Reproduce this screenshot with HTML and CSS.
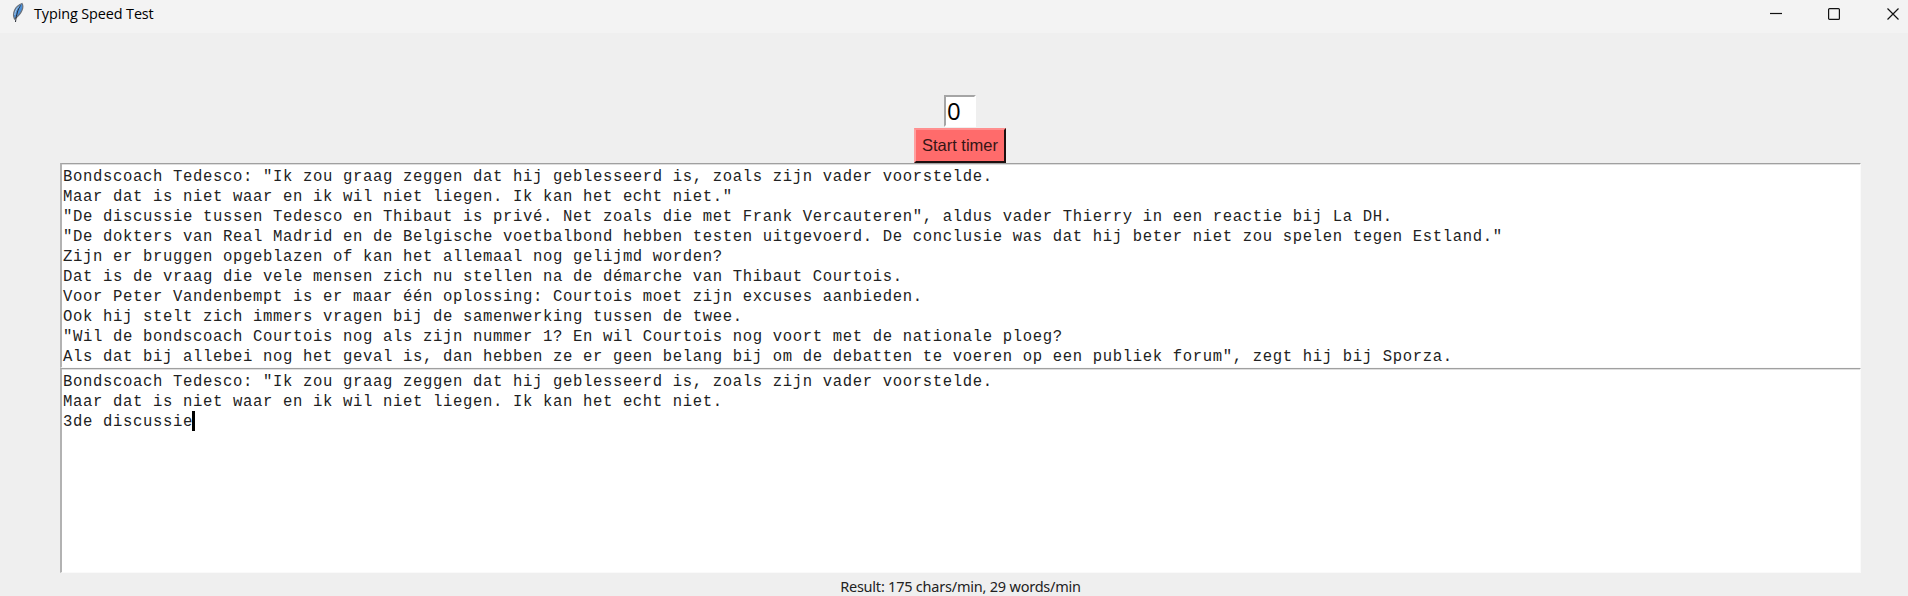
FILE: index.html
```html
<!DOCTYPE html>
<html lang="nl">
<head>
<meta charset="utf-8">
<title>Typing Speed Test</title>
<link rel="stylesheet" href="styles.css">
</head>
<body>
<header class="titlebar">
<svg class="feather" width="14" height="22" viewBox="0 0 14 22"><path d="M3.500 17C1 11 4 4 11 1.500c2 3 .5 10-7.500 15.500z" fill="#4a90d9" stroke="#6b7078" stroke-width="1.200"/><path d="M9.500 3.500C7 7 5.500 12 4.500 20" fill="none" stroke="#252a33" stroke-width="1"/><path d="M8 4.500C5 7 4 10 3.800 13" fill="none" stroke="#a9c8e5" stroke-width="1"/></svg>
<span class="caption">Typing Speed Test</span>
<div class="controls">
<svg width="12" height="12" viewBox="0 0 12 12"><path d="M0 5.500h12"/></svg>
<svg width="12" height="12" viewBox="0 0 12 12"><rect x=".6" y=".6" width="10.800" height="10.800" rx="1"/></svg>
<svg width="12" height="12" viewBox="0 0 12 12"><path d="M.5.500l11 11M11.500.500l-11 11"/></svg>
</div>
</header>
<main class="content">
<div class="counter">0</div>
<button class="start"><span>Start timer</span></button>
<div class="textbox">Bondscoach Tedesco: "Ik zou graag zeggen dat hij geblesseerd is, zoals zijn vader voorstelde.
Maar dat is niet waar en ik wil niet liegen. Ik kan het echt niet."
"De discussie tussen Tedesco en Thibaut is privé. Net zoals die met Frank Vercauteren", aldus vader Thierry in een reactie bij La DH.
"De dokters van Real Madrid en de Belgische voetbalbond hebben testen uitgevoerd. De conclusie was dat hij beter niet zou spelen tegen Estland."
Zijn er bruggen opgeblazen of kan het allemaal nog gelijmd worden?
Dat is de vraag die vele mensen zich nu stellen na de démarche van Thibaut Courtois.
Voor Peter Vandenbempt is er maar één oplossing: Courtois moet zijn excuses aanbieden.
Ook hij stelt zich immers vragen bij de samenwerking tussen de twee.
"Wil de bondscoach Courtois nog als zijn nummer 1? En wil Courtois nog voort met de nationale ploeg?
Als dat bij allebei nog het geval is, dan hebben ze er geen belang bij om de debatten te voeren op een publiek forum", zegt hij bij Sporza.</div>
<div class="textbox">Bondscoach Tedesco: "Ik zou graag zeggen dat hij geblesseerd is, zoals zijn vader voorstelde.
Maar dat is niet waar en ik wil niet liegen. Ik kan het echt niet.
3de discussie<span class="caret"></span></div>
<div class="result">Result: 175 chars/min, 29 words/min</div>
</main>
</body>
</html>
```
FILE: styles.css
```css
* { box-sizing: border-box; }
body { margin: 0; width: 1908px; height: 596px; overflow: hidden; background: #efefef; color: #000; font-family: "Noto Sans", "Open Sans", sans-serif; }
.titlebar { display: flex; height: 33px; background: #f3f3f3; padding-left: 11px; }
.feather { margin-top: 2px; }
.caption { margin-left: 9px; font-family: "Open Sans", sans-serif; font-size: 14.4px; line-height: 28px; letter-spacing: -.1px; white-space: nowrap; }
.controls { display: flex; gap: 47px; margin: 8px 9px 0 auto; }
.controls svg { fill: none; stroke: #111; stroke-width: 1.2; }
.controls svg:first-child { margin-right: -1px; }
.content { display: flex; flex-direction: column; align-items: center; width: 1801px; margin-left: 60px; padding-top: 62px; }
.counter { width: 32px; height: 32px; margin-right: 1px; background: #fff; border: 2px solid #fff; border-top-color: #a5a5a5; border-left-color: #a5a5a5; padding-left: 1px; font-family: "Open Sans", sans-serif; font-size: 24px; line-height: 28px; }
.start { width: 92px; height: 35px; margin: 1px 1px 0 0; padding: 0; background: #ff6b6b; border: 2px solid #1c1010; border-top-color: #ff8f8f; border-left-color: #ffa0a0; color: #351515; font-family: "Liberation Sans", Arial, sans-serif; font-size: 16.5px; line-height: 31px; white-space: nowrap; }
.textbox { width: 1801px; height: 205px; padding: 3px 1px 0; background: #fff; border: solid #fafafa; border-width: 1px 1px 1px 2px; border-top-color: #a0a0a0; border-left-color: #b2b2b2; box-shadow: inset 0 1px #dedede; color: #222; font-family: "Courier New", "Liberation Mono", monospace; font-size: 15.6px; letter-spacing: .64px; line-height: 20px; white-space: pre; overflow: hidden; }
.caret { display: inline-block; width: 3px; height: 20px; margin: -1px 0 0 -1px; background: #000; vertical-align: top; }
.result { font-size: 14.5px; letter-spacing: -.22px; line-height: 26px; color: #222; white-space: nowrap; }
```
